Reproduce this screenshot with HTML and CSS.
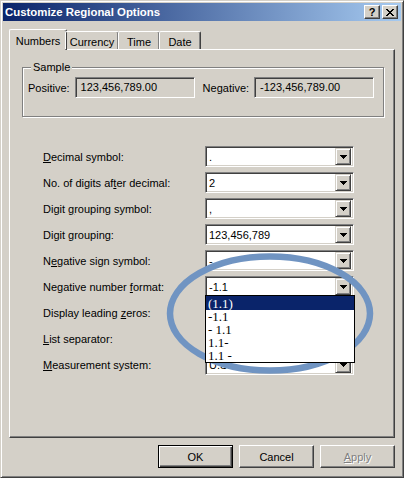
FILE: index.html
```html
<!DOCTYPE html>
<html lang="en">
<head>
    <meta charset="UTF-8">
    <meta name="viewport" content="width=device-width, initial-scale=1.0">
    <title>Customize Regional Options</title>
    <link rel="stylesheet" href="styles.css">
</head>
<body>
    <div class="window">
        <div class="titlebar">
            <span class="title">Customize Regional Options</span>
            <span class="caption-buttons">
                <button class="cap-btn">?</button>
                <button class="cap-btn">
                    <svg width="8" height="7" viewBox="0 0 8 7" shape-rendering="crispEdges">
                        <path d="M0 0h2v1H0zM6 0h2v1H6zM1 1h2v1H1zM5 1h2v1H5zM2 2h4v1H2zM3 3h2v1H3zM2 4h4v1H2zM1 5h2v1H1zM5 5h2v1H5zM0 6h2v1H0zM6 6h2v1H6z" fill="#000"/>
                    </svg>
                </button>
            </span>
        </div>

        <div class="content">
            <div class="tabs">
                <div class="tab active" style="width:58px">Numbers</div>
                <div class="tab" style="width:54px">Currency</div>
                <div class="tab" style="width:42px">Time</div>
                <div class="tab" style="width:42px">Date</div>
            </div>

            <section class="panel">
                <fieldset class="sample">
                    <legend>Sample</legend>
                    <div class="sample-row">
                        <span class="sample-label">Positive:</span>
                        <div class="readonly">123,456,789.00</div>
                        <span class="sample-label neg">Negative:</span>
                        <div class="readonly">-123,456,789.00</div>
                    </div>
                </fieldset>

                <div class="settings">
                    <div class="row">
                        <span class="label"><u>D</u>ecimal symbol:</span>
                        <div class="combo"><span class="value">.</span><span class="drop"><svg width="7" height="4" shape-rendering="crispEdges"><path d="M0 0h7v1H0zM1 1h5v1H1zM2 2h3v1H2zM3 3h1v1H3z"/></svg></span></div>
                    </div>
                    <div class="row">
                        <span class="label">No. of digits af<u>t</u>er decimal:</span>
                        <div class="combo"><span class="value">2</span><span class="drop"><svg width="7" height="4" shape-rendering="crispEdges"><path d="M0 0h7v1H0zM1 1h5v1H1zM2 2h3v1H2zM3 3h1v1H3z"/></svg></span></div>
                    </div>
                    <div class="row">
                        <span class="label">Digit <u>g</u>rouping symbol:</span>
                        <div class="combo"><span class="value">,</span><span class="drop"><svg width="7" height="4" shape-rendering="crispEdges"><path d="M0 0h7v1H0zM1 1h5v1H1zM2 2h3v1H2zM3 3h1v1H3z"/></svg></span></div>
                    </div>
                    <div class="row">
                        <span class="label">Digit grouping:</span>
                        <div class="combo"><span class="value">123,456,789</span><span class="drop"><svg width="7" height="4" shape-rendering="crispEdges"><path d="M0 0h7v1H0zM1 1h5v1H1zM2 2h3v1H2zM3 3h1v1H3z"/></svg></span></div>
                    </div>
                    <div class="row">
                        <span class="label">N<u>e</u>gative sign symbol:</span>
                        <div class="combo"><span class="value">-</span><span class="drop"><svg width="7" height="4" shape-rendering="crispEdges"><path d="M0 0h7v1H0zM1 1h5v1H1zM2 2h3v1H2zM3 3h1v1H3z"/></svg></span></div>
                    </div>
                    <div class="row">
                        <span class="label">Negative number <u>f</u>ormat:</span>
                        <div class="combo open"><span class="value">-1.1</span><span class="drop"><svg width="7" height="4" shape-rendering="crispEdges"><path d="M0 0h7v1H0zM1 1h5v1H1zM2 2h3v1H2zM3 3h1v1H3z"/></svg></span>
                            <ul class="listbox">
                                <li class="selected">(1.1)</li>
                                <li>-1.1</li>
                                <li>- 1.1</li>
                                <li>1.1-</li>
                                <li>1.1 -</li>
                            </ul>
                        </div>
                    </div>
                    <div class="row">
                        <span class="label">Display leading <u>z</u>eros:</span>
                        <div class="combo"><span class="value"></span><span class="drop"><svg width="7" height="4" shape-rendering="crispEdges"><path d="M0 0h7v1H0zM1 1h5v1H1zM2 2h3v1H2zM3 3h1v1H3z"/></svg></span></div>
                    </div>
                    <div class="row">
                        <span class="label"><u>L</u>ist separator:</span>
                        <div class="combo"><span class="value"></span><span class="drop"><svg width="7" height="4" shape-rendering="crispEdges"><path d="M0 0h7v1H0zM1 1h5v1H1zM2 2h3v1H2zM3 3h1v1H3z"/></svg></span></div>
                    </div>
                    <div class="row">
                        <span class="label"><u>M</u>easurement system:</span>
                        <div class="combo"><span class="value">U.S.</span><span class="drop"><svg width="7" height="4" shape-rendering="crispEdges"><path d="M0 0h7v1H0zM1 1h5v1H1zM2 2h3v1H2zM3 3h1v1H3z"/></svg></span></div>
                    </div>
                </div>
            </section>

            <div class="actions">
                <button class="btn default">OK</button>
                <button class="btn">Cancel</button>
                <button class="btn disabled"><u>A</u>pply</button>
            </div>
        </div>
    </div>

    <!-- hand-drawn marker ring around the format dropdown -->
    <svg class="marker" width="220" height="130" viewBox="0 0 220 130">
        <ellipse cx="110" cy="63.5" rx="100" ry="57" fill="none" stroke="#7094c2" stroke-width="6.5"/>
    </svg>
</body>
</html>
```

FILE: styles.css
```css
body {
    margin: 0;
    background-color: #d4d0c8;
}
* {
    font-family: "Liberation Sans", Arial, sans-serif;
    font-size: 11px;
    box-sizing: border-box;
}
.window {
    width: 404px;
    height: 478px;
    padding: 1px;
    border: 1px solid;
    border-color: #d4d0c8 #404040 #404040 #d4d0c8;
    box-shadow: inset 1px 1px #fff, inset -1px -1px #808080;
    background-color: #d4d0c8;
    display: flex;
    flex-direction: column;
}
.titlebar {
    height: 18px;
    margin: 1px;
    display: flex;
    align-items: center;
    justify-content: space-between;
    background: linear-gradient(to right, #0a246a, #a6caf0);
    padding: 0 3px 0 2px;
}
.title {
    color: white;
    font-weight: bold;
    font-size: 11.4px;
}
.caption-buttons {
    display: flex;
    gap: 2px;
}
.cap-btn {
    width: 16px;
    height: 14px;
    padding: 0;
    border: 1px solid;
    border-color: #fff #404040 #404040 #fff;
    box-shadow: inset -1px -1px #808080;
    background-color: #d4d0c8;
    display: flex;
    align-items: center;
    justify-content: center;
    font-weight: bold;
    font-size: 11px;
    line-height: 1;
    color: #000;
}

.content {
    padding: 7px 7px 0 7px;
    display: flex;
    flex-direction: column;
}
.tabs {
    display: flex;
    align-items: flex-end;
    height: 20px;
    position: relative;
    z-index: 1;
}
.tab {
    height: 18px;
    border: 1px solid;
    border-bottom: none;
    border-color: #fff #404040 #404040 #fff;
    box-shadow: inset -1px 0 #808080;
    border-radius: 2px 2px 0 0;
    display: flex;
    align-items: center;
    justify-content: center;
    padding-top: 2px;
    margin-left: -1px;
}
.tab:first-child {
    margin-left: 0;
}
.tab.active {
    height: 21px;
    margin-bottom: -1px;
    background-color: #d4d0c8;
    padding-top: 1px;
    margin-right: -1px;
}

.panel {
    height: 389px;
    border: 1px solid;
    border-color: #fff #404040 #404040 #fff;
    box-shadow: inset -1px -1px #808080;
    padding: 11px 10px 0 12px;
}

.sample {
    margin: 0;
    height: 56px;
    border: 1px solid #808080;
    box-shadow: inset 1px 1px #fff, 1px 1px #fff;
    padding: 4px 4px 0 5px;
}
.sample legend {
    padding: 0 2px;
    margin-left: 3px;
    background-color: #d4d0c8;
}
.sample-row {
    display: flex;
    align-items: center;
}
.sample-label.neg {
    margin-left: 8px;
}
.readonly {
    width: 120px;
    height: 21px;
    margin-left: 5px;
    border: 1px solid;
    border-color: #808080 #fff #fff #808080;
    box-shadow: inset 1px 1px #404040;
    padding: 3px 0 0 5px;
}

.settings {
    margin-top: 29px;
    padding-left: 21px;
    display: flex;
    flex-direction: column;
    gap: 5px;
}
.row {
    display: flex;
    align-items: center;
    height: 21px;
}
.label {
    width: 162px;
}
.combo {
    position: relative;
    width: 149px;
    height: 21px;
    border: 1px solid;
    border-color: #808080 #fff #fff #808080;
    box-shadow: inset 1px 1px #404040, inset -1px -1px #d4d0c8;
    background-color: #fff;
    display: flex;
    align-items: center;
    padding: 0 2px 0 3px;
}
.combo .value {
    flex: 1;
}
.drop {
    width: 16px;
    height: 17px;
    border: 1px solid;
    border-color: #d4d0c8 #404040 #404040 #d4d0c8;
    box-shadow: inset 1px 1px #fff, inset -1px -1px #808080;
    background-color: #d4d0c8;
    display: flex;
    align-items: center;
    justify-content: center;
    padding-top: 1px;
}

/* open list of the negative format combo */
.listbox {
    position: absolute;
    left: -1px;
    top: 18px;
    width: 150px;
    margin: 0;
    padding: 0;
    list-style: none;
    background-color: #fff;
    border: 1px solid #000;
    z-index: 2;
}
.listbox li {
    font-family: "Liberation Serif", "Times New Roman", serif;
    font-size: 13px;
    height: 13px;
    line-height: 13px;
    padding-left: 2px;
}
.listbox li.selected {
    background-color: #0a246a;
    color: #fff;
    height: 14px;
    line-height: 15px;
}

.actions {
    display: flex;
    justify-content: flex-end;
    gap: 6px;
    margin-top: 7px;
}
.btn {
    width: 75px;
    height: 23px;
    border: 1px solid;
    border-color: #fff #404040 #404040 #fff;
    box-shadow: inset -1px -1px #808080;
    background-color: #d4d0c8;
    color: #000;
    padding: 0;
}
.btn.default {
    border-color: #000;
    box-shadow: inset 1px 1px #fff, inset -1px -1px #404040, inset -2px -2px #808080;
}
.btn.disabled {
    color: #808080;
    text-shadow: 1px 1px #fff;
}

.marker {
    position: absolute;
    left: 160px;
    top: 250px;
    pointer-events: none;
}
```
